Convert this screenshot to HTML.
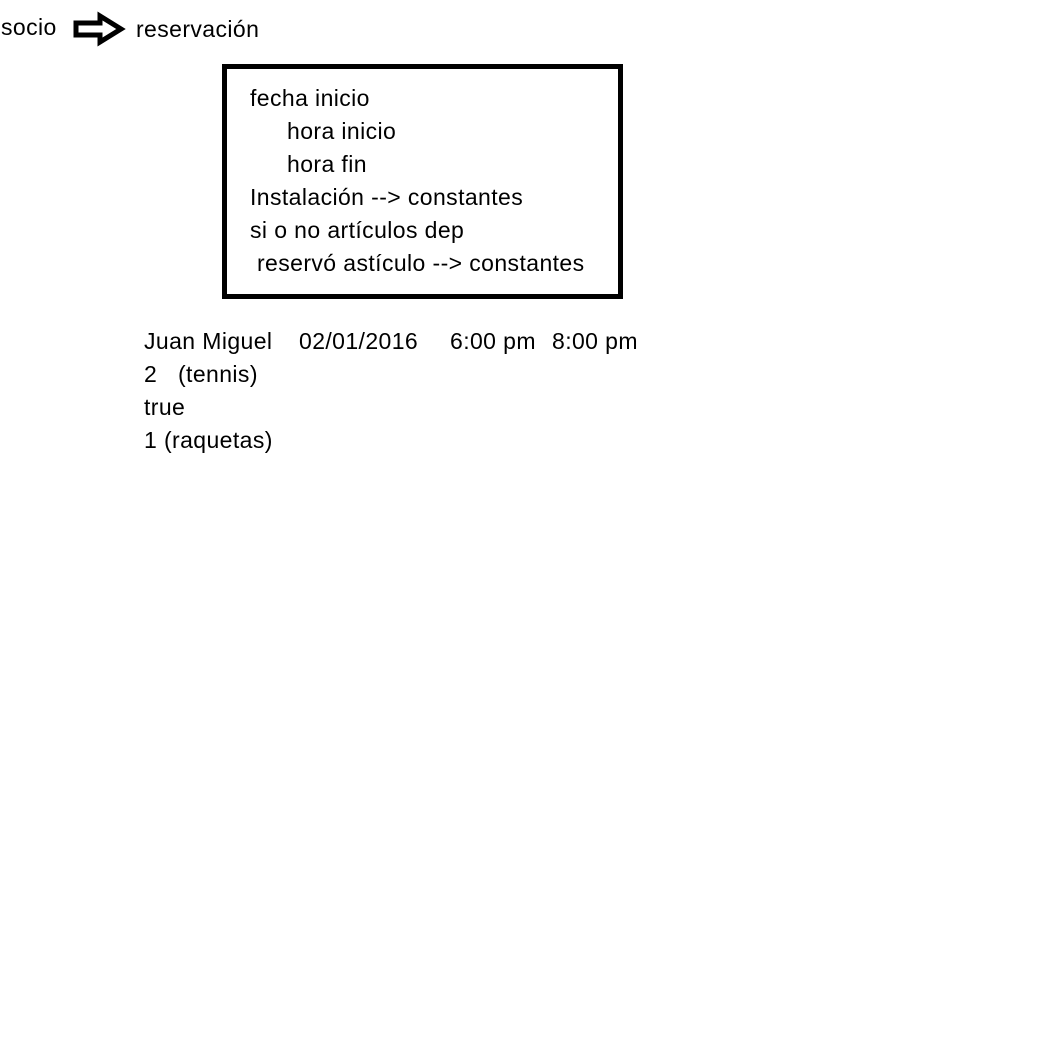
<!DOCTYPE html>
<html><head><meta charset="utf-8"><style>
html,body{margin:0;padding:0;background:#fff;width:1050px;height:1051px;overflow:hidden}
.t{position:absolute;font-family:"Liberation Sans",sans-serif;font-size:23px;letter-spacing:0.4px;line-height:33px;color:#000;white-space:pre}
.box{position:absolute;left:222px;top:64px;width:391px;height:225px;border:5px solid #000}
</style></head><body>
<div class="t" style="left:1px;top:11px">socio</div>
<svg style="position:absolute;left:0;top:0" width="140" height="60"><polygon points="76,23 100,23 100,16 121,29 100,42 100,35 76,35" fill="none" stroke="#000" stroke-width="5" stroke-linejoin="miter"/></svg>
<div class="t" style="left:136px;top:13px">reservación</div>
<div class="box"></div>
<div class="t" style="left:250px;top:82px">fecha inicio</div>
<div class="t" style="left:287px;top:115px">hora inicio</div>
<div class="t" style="left:287px;top:148px">hora fin</div>
<div class="t" style="left:250px;top:181px">Instalación --&gt; constantes</div>
<div class="t" style="left:250px;top:214px">si o no artículos dep</div>
<div class="t" style="left:257px;top:247px">reservó astículo --&gt; constantes</div>
<div class="t" style="left:144px;top:325px">Juan Miguel</div>
<div class="t" style="left:299px;top:325px">02/01/2016</div>
<div class="t" style="left:450px;top:325px">6:00 pm</div>
<div class="t" style="left:552px;top:325px">8:00 pm</div>
<div class="t" style="left:144px;top:358px">2</div>
<div class="t" style="left:178px;top:358px">(tennis)</div>
<div class="t" style="left:144px;top:391px">true</div>
<div class="t" style="left:144px;top:424px">1 (raquetas)</div>
</body></html>
